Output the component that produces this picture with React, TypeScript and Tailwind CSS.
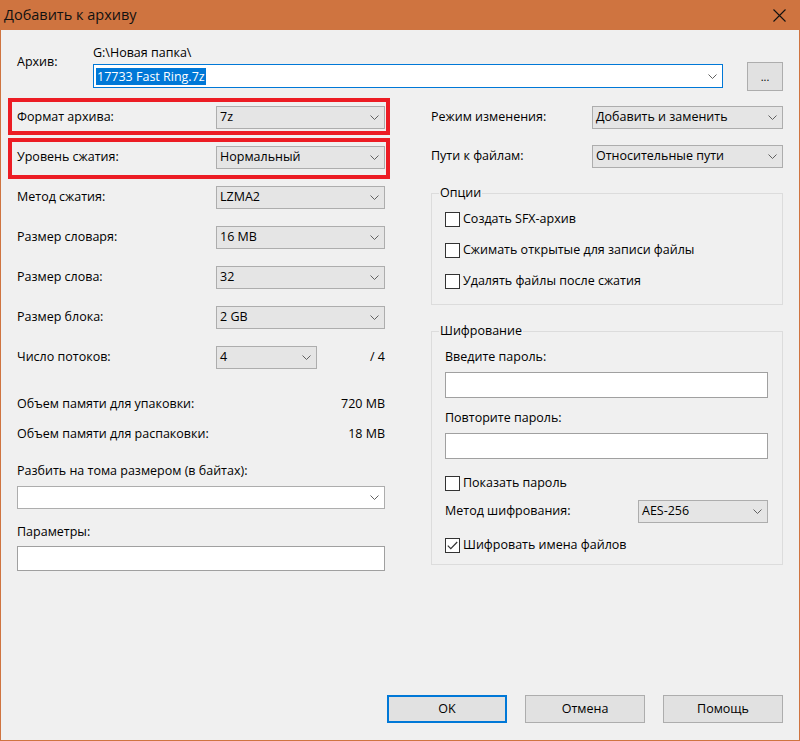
import React from "react";

const FONT = { fontFamily: '"Open Sans", "Liberation Sans", Arial, sans-serif' };

function Chevron() {
  return (
    <svg width="9" height="5" viewBox="0 0 9 5" className="shrink-0">
      <path d="M0.5 0.5 L4.5 4.5 L8.5 0.5" fill="none" stroke="#606060" strokeWidth="1" />
    </svg>
  );
}

function Combo({ value, className = "" }: { value: string; className?: string }) {
  return (
    <div
      className={
        "flex h-[23px] items-center justify-between border border-[#adadad] bg-[#e5e5e5] pl-[3px] pr-[5px] text-[12.5px] text-black " +
        className
      }
    >
      <span className="leading-none">{value}</span>
      <Chevron />
    </div>
  );
}

function CheckBox({ label, checked = false }: { label: string; checked?: boolean }) {
  return (
    <div className="flex h-full items-center">
      <div className="flex h-[15px] w-[15px] items-center justify-center border border-[#333333] bg-white">
        {checked && (
          <svg width="11" height="9" viewBox="0 0 11 9">
            <path d="M0.8 4.6 L3.8 7.6 L10.2 1" fill="none" stroke="#333" strokeWidth="1.2" />
          </svg>
        )}
      </div>
      <span className="ml-[3px] text-[12.5px] leading-none text-black">{label}</span>
    </div>
  );
}

function LeftRow({ label, children }: { label: string; children: React.ReactNode }) {
  return (
    <div className="flex h-[40px] items-center">
      <span className="w-[199px] text-[12.5px] leading-none">{label}</span>
      {children}
    </div>
  );
}

function Button({ label, def = false }: { label: string; def?: boolean }) {
  return (
    <div
      className={
        "flex h-[28px] w-[120px] items-center justify-center bg-[#e1e1e1] text-[12.5px] text-black " +
        (def ? "border-2 border-[#0078d7]" : "border border-[#adadad]")
      }
    >
      {label}
    </div>
  );
}

export default function App() {
  return (
    <div
      style={FONT}
      className="relative flex h-[741px] w-[800px] flex-col border border-[#cf7440] bg-[#f0f0f0] text-black"
    >
      {/* title bar */}
      <div className="flex h-[29px] shrink-0 items-center justify-between bg-[#cf7440] pl-[3px] pr-[13px]">
        <span className="text-[14.5px] leading-none text-[#111]">Добавить к архиву</span>
        <svg width="13" height="13" viewBox="0 0 13 13">
          <path d="M0.5 0.5 L12.5 12.5 M12.5 0.5 L0.5 12.5" stroke="#111" strokeWidth="1.1" />
        </svg>
      </div>

      <div className="flex flex-1 flex-col px-[16px] pb-[17px]">
        {/* archive */}
        <div className="flex h-[67px] items-start pt-[15px]">
          <span className="mt-[9px] w-[76px] text-[12.5px] leading-[16px]">Архив:</span>
          <div className="flex flex-1 flex-col">
            <span className="text-[12.5px] leading-[16px]">G:\Новая папка\</span>
            <div className="mt-[3px] flex h-[24px] items-center justify-between border border-[#0078d7] bg-white pl-[2px] pr-[5px]">
              <span className="bg-[#0078d7] px-px text-[12.5px] leading-[17px] text-white">17733 Fast Ring.7z</span>
              <Chevron />
            </div>
          </div>
          <div className="ml-[24px] mt-[17px] flex h-[29px] w-[36px] items-start justify-center border border-[#adadad] bg-[#e1e1e1] pt-[8px] text-[11px] leading-none">
            ...
          </div>
        </div>

        <div className="flex flex-1 gap-[46px]">
          {/* left column */}
          <div className="flex w-[368px] flex-col">
            <LeftRow label="Формат архива:">
              <Combo value="7z" className="flex-1" />
            </LeftRow>
            <LeftRow label="Уровень сжатия:">
              <Combo value="Нормальный" className="flex-1" />
            </LeftRow>
            <LeftRow label="Метод сжатия:">
              <Combo value="LZMA2" className="flex-1" />
            </LeftRow>
            <LeftRow label="Размер словаря:">
              <Combo value="16 MB" className="flex-1" />
            </LeftRow>
            <LeftRow label="Размер слова:">
              <Combo value="32" className="flex-1" />
            </LeftRow>
            <LeftRow label="Размер блока:">
              <Combo value="2 GB" className="flex-1" />
            </LeftRow>
            <LeftRow label="Число потоков:">
              <Combo value="4" className="w-[101px]" />
              <span className="ml-auto text-[12.5px] leading-none">/ 4</span>
            </LeftRow>

            <div className="mt-[12px] flex h-[30px] items-center justify-between text-[12.5px]">
              <span>Объем памяти для упаковки:</span>
              <span>720 MB</span>
            </div>
            <div className="flex h-[30px] items-center justify-between text-[12.5px]">
              <span>Объем памяти для распаковки:</span>
              <span>18 MB</span>
            </div>

            <span className="mt-[14px] text-[12.5px] leading-[16px]">Разбить на тома размером (в байтах):</span>
            <div className="mt-[7px] flex h-[23px] items-center justify-end border border-[#adadad] bg-white pr-[5px]">
              <Chevron />
            </div>
            <span className="mt-[15px] text-[12.5px] leading-[16px]">Параметры:</span>
            <div className="mt-[6px] h-[25px] border border-[#a0a0a0] bg-white" />
          </div>

          {/* right column */}
          <div className="flex w-[352px] flex-col">
            <div className="flex h-[40px] items-center">
              <span className="w-[161px] text-[12.5px] leading-none">Режим изменения:</span>
              <Combo value="Добавить и заменить" className="flex-1" />
            </div>
            <div className="flex h-[39px] items-center">
              <span className="w-[161px] text-[12.5px] leading-none">Пути к файлам:</span>
              <Combo value="Относительные пути" className="flex-1" />
            </div>

            <fieldset className="mt-[9px] border border-[#dcdcdc] px-[13px] pb-[7px] pt-[3px]">
              <legend className="-ml-[6px] px-[1px] text-[12.5px] leading-[16px]">Опции</legend>
              <div className="h-[31px]">
                <CheckBox label="Создать SFX-архив" />
              </div>
              <div className="h-[31px]">
                <CheckBox label="Сжимать открытые для записи файлы" />
              </div>
              <div className="h-[31px]">
                <CheckBox label="Удалять файлы после сжатия" />
              </div>
            </fieldset>

            <fieldset className="mt-[18px] flex flex-col border border-[#dcdcdc] pb-[7px] pl-[13px] pr-[14px] pt-[10px]">
              <legend className="-ml-[6px] px-[1px] text-[12.5px] leading-[16px]">Шифрование</legend>
              <span className="text-[12.5px] leading-[16px]">Введите пароль:</span>
              <div className="mt-[7px] h-[26px] border border-[#a0a0a0] bg-white" />
              <span className="mt-[12px] text-[12.5px] leading-[16px]">Повторите пароль:</span>
              <div className="mt-[7px] h-[26px] border border-[#a0a0a0] bg-white" />
              <div className="mt-[12px] h-[24px]">
                <CheckBox label="Показать пароль" />
              </div>
              <div className="mt-[5px] flex h-[23px] items-center justify-between">
                <span className="text-[12.5px] leading-none">Метод шифрования:</span>
                <Combo value="AES-256" className="w-[130px]" />
              </div>
              <div className="mt-[10px] h-[24px]">
                <CheckBox label="Шифровать имена файлов" checked />
              </div>
            </fieldset>
          </div>
        </div>

        <div className="flex justify-end gap-[18px]">
          <Button label="OK" def />
          <Button label="Отмена" />
          <Button label="Помощь" />
        </div>
      </div>

      {/* red highlight annotations */}
      <div className="pointer-events-none absolute left-[7px] top-[97px] h-[37px] w-[382px] border-[4px] border-[#ec1c24]" />
      <div className="pointer-events-none absolute left-[7px] top-[137px] h-[41px] w-[382px] border-[4px] border-[#ec1c24]" />
    </div>
  );
}
